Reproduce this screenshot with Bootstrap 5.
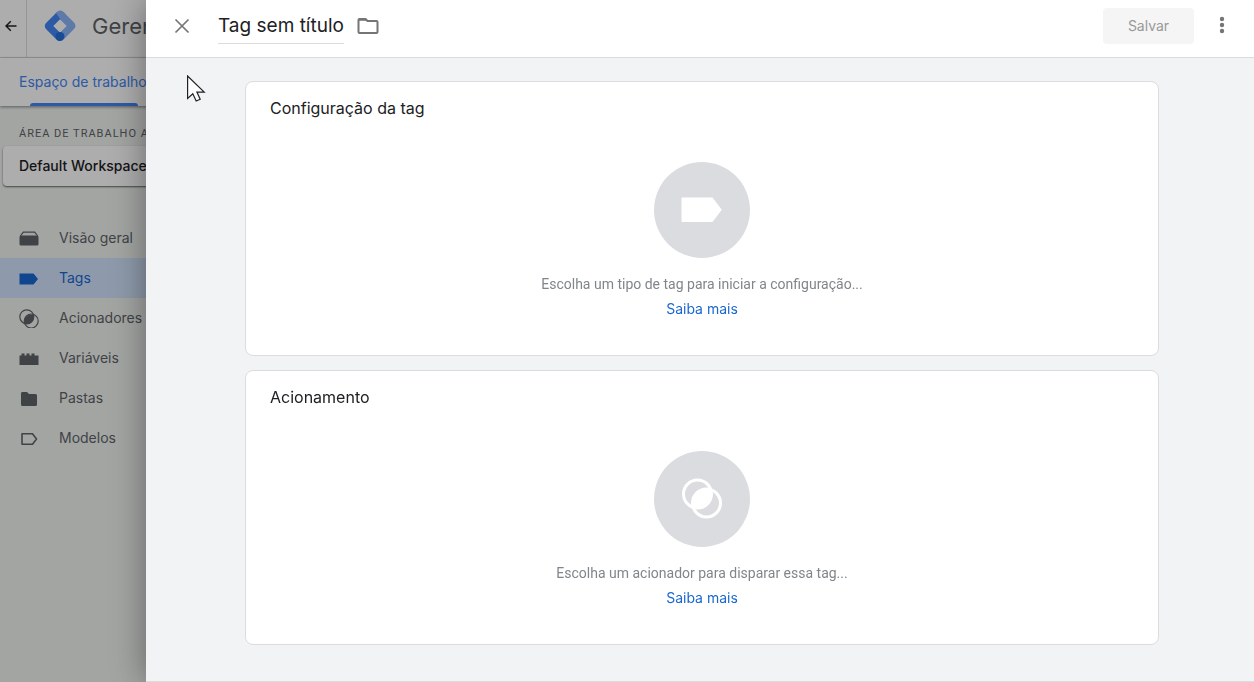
<!DOCTYPE html>
<html lang="pt-BR">
<head>
<meta charset="utf-8">
<meta name="viewport" content="width=device-width, initial-scale=1">
<title>Gerenciador de tags</title>
<link href="https://cdn.jsdelivr.net/npm/bootstrap@5.3.0/dist/css/bootstrap.min.css" rel="stylesheet">
<style>
  body { font-family: Inter, "Open Sans", sans-serif; font-size: 14px; line-height: 20px; color: #202124; background: #f1f3f1; }
  a { text-decoration: none; }
  svg { display: block; flex: none; }

  /* Page behind the sheet */
  .backpage { min-height: 100vh; overflow: hidden; white-space: nowrap; }
  .brandbar { height: 58px; border-bottom: 1px solid #dadce0; background: #fff; }
  .backbtn { width: 27px; padding: 0 4px 6px 0; border-right: 1px solid #dadce0; color: #202124; }
  .brand { padding: 0 0 6px 16px; gap: 15px; }
  .product { font-size: 22px; line-height: 32px; color: #5f6368; }
  .tabbar { height: 48px; padding-left: 19px; background: #fff; box-shadow: 0 1px 3px rgba(60,64,67,.6); }
  .tab-link { color: #4285f4; }
  .tab-link::after { content: ""; position: absolute; left: 11px; right: 9px; bottom: 0; height: 3px; border-radius: 3px 3px 0 0; background: #4285f4; }
  .sidemenu { width: 256px; }
  .overline { padding: 18px 0 2px 19px; font-family: Roboto, sans-serif; font-size: 11px; letter-spacing: 1px; color: #5f6368; }
  .workspace { height: 40px; margin-left: 3px; padding: 0 16px; border: 0; border-radius: 4px; background: #fff; text-align: left; font-weight: 500; color: #202124; box-shadow: 0 1px 2px rgba(60,64,67,.8); }
  .side-link { height: 40px; padding-left: 19px; gap: 20px; color: #5f6368; }
  .side-link.active { background: #d2e3fc; color: #1967d2; }
  .scrim { position: fixed; inset: 0; background: rgba(0,0,0,.32); }

  /* Sheet */
  .sheet { position: absolute; top: 0; right: 0; left: 146px; min-height: 100vh; background: #f1f3f4; border-bottom: 1px solid #dadce0; box-shadow: 0 0 32px rgba(0,0,0,.4); }
  .sheet-head { height: 58px; padding: 0 20px 6px 26px; background: #fff; border-bottom: 1px solid #dadce0; }
  .plain { border: 0; padding: 0; background: none; color: #757575; }
  .title-input { width: 126px; height: 36px; margin-left: 26px; margin-right: 12px; padding: 0; border: 0; border-bottom: 1px solid #dadce0; background: none; font-size: 19px; color: #202124; }
  .save { width: 91px; height: 36px; border: 0; border-radius: 4px; background: #f5f5f5; color: #999; }
  .sheet-body { padding: 23px 95px 36px 99px; gap: 14px; }
  .panel { padding: 14px 24px 36px; border: 1px solid #dadce0; border-radius: 8px; background: #fff; }
  .panel h2 { margin: 0 0 42px; font-size: 16px; line-height: 24px; font-weight: 400; }
  .disc { width: 96px; height: 96px; margin-bottom: 16px; border-radius: 50%; background: #dadce0; }
  .hint { margin: 0 0 5px; font-family: Roboto, sans-serif; color: #80868b; }
  .more { color: #1967d2; }
  .pointer { position: absolute; left: 187px; top: 75px; pointer-events: none; }
</style>
</head>
<body>
<div class="backpage">
  <header class="brandbar d-flex">
    <a href="#" class="backbtn d-flex align-items-center justify-content-center" aria-label="Voltar">
      <svg width="12" height="12" viewBox="0 0 12 12" fill="none" stroke="currentColor" stroke-width="1.5"><path d="M11.500 6H1.200M5.800 1.200 1 6l4.800 4.800"/></svg>
    </a>
    <div class="brand d-flex align-items-center">
      <svg width="34" height="32" viewBox="0 0 34 32">
        <path d="M12.500 3.500 Q17-1.500 21.500 3 L31 12.500 Q34 16 31 19 L21 29 16.500 23 23.500 16 12 5Z" fill="#8ab4f8"/>
        <path d="M13.500 2.500 L18 8.500 10.500 16 17 22.500 17 31 Q15 31 13.500 29.500 L3 19 Q.5 16 3 13Z" fill="#4285f4"/>
        <path d="M13 3Q17-1.500 21 2.500L23 4.500 17.500 9.500Z" fill="#8ab4f8"/>
        <path d="m17 9.500 6.500 6.500L17 22.500 10.500 16Z" fill="#fff"/>
        <circle cx="17" cy="26.500" r="4.500" fill="#246fdb"/>
      </svg>
      <span class="product">Gerenciador de tags</span>
    </div>
  </header>
  <nav class="tabbar position-relative d-flex">
    <a href="#" class="tab-link position-relative d-flex align-items-center">Espaço de trabalho</a>
  </nav>
  <aside class="sidemenu d-flex flex-column">
    <div class="overline">ÁREA DE TRABALHO ATUAL</div>
    <button type="button" class="workspace">Default Workspace</button>
    <nav class="d-flex flex-column mt-4 pt-2">
      <a href="#" class="side-link d-flex align-items-center">
        <svg width="20" height="20" viewBox="0 0 20 20" fill="currentColor"><path d="M4 3.500h12l3 4-.5 1-3.200-3.700H4.700L1.500 8.500 1 7.500z"/><rect x=".5" y="7.500" width="19" height="10" rx="1.500"/></svg>
        <span>Visão geral</span></a>
      <a href="#" class="side-link active d-flex align-items-center">
        <svg width="20" height="20" viewBox="0 0 20 20" fill="currentColor"><path d="M.5 5.500h14L19 11l-4.500 5.500H.5z"/></svg>
        <span>Tags</span></a>
      <a href="#" class="side-link d-flex align-items-center">
        <svg width="20" height="20" viewBox="0 0 20 20"><g fill="none" stroke="currentColor" stroke-width="1.200"><circle cx="7.800" cy="8.800" r="7"/><circle cx="12.200" cy="13" r="7"/></g><path d="M5.200 13.500a7 7 0 0 1 9.300-6.700 7 7 0 0 1-9 8.700z" fill="currentColor"/></svg>
        <span>Acionadores</span></a>
      <a href="#" class="side-link d-flex align-items-center">
        <svg width="20" height="20" viewBox="0 0 20 20" fill="currentColor"><path d="M.5 7.500h2v-2h3v2h2v-2h3v2h2v-2h3v2h4V17H.5z"/></svg>
        <span>Variáveis</span></a>
      <a href="#" class="side-link d-flex align-items-center">
        <svg width="20" height="20" viewBox="0 0 20 20" fill="currentColor"><path d="M3 4h5l2 2h6.500q1.500 0 1.500 1.500v9q0 1.500-1.500 1.500H3.500Q2 18 2 16.500V5.500Q2 4 3 4z"/></svg>
        <span>Pastas</span></a>
      <a href="#" class="side-link d-flex align-items-center">
        <svg width="20" height="20" viewBox="0 0 20 20" fill="none" stroke="currentColor" stroke-width="1.600" stroke-linejoin="round"><path d="M3 5.800h10.500L17.500 11l-4 5.200H3z"/></svg>
        <span>Modelos</span></a>
    </nav>
  </aside>
</div>
<div class="scrim"></div>

<main class="sheet">
  <header class="sheet-head d-flex align-items-center">
    <button type="button" class="plain" aria-label="Fechar"><svg width="20" height="20" viewBox="0 0 20 20" stroke="currentColor" stroke-width="1.700"><path d="m3.500 3.500 13 13M16.500 3.500l-13 13"/></svg></button>
    <input class="title-input" type="text" value="Tag sem título" aria-label="Nome da tag">
    <button type="button" class="plain" aria-label="Pasta"><svg width="24" height="24" viewBox="0 0 24 24" fill="none" stroke="currentColor" stroke-width="2" stroke-linejoin="round"><path d="M3.500 5h6l2 2h9q1 0 1 1v10q0 1-1 1h-17q-1 0-1-1V6q0-1 1-1z"/><path d="M3 5.800h7.500" /></svg></button>
    <button type="button" class="save ms-auto" disabled>Salvar</button>
    <button type="button" class="plain ms-3" aria-label="Mais opções"><svg width="24" height="24" viewBox="0 0 24 24" fill="currentColor"><circle cx="12" cy="5" r="2.200"/><circle cx="12" cy="11" r="2.200"/><circle cx="12" cy="17" r="2.200"/></svg></button>
  </header>
  <div class="sheet-body d-flex flex-column">
    <section class="panel">
      <h2>Configuração da tag</h2>
      <div class="d-flex flex-column align-items-center">
        <div class="disc d-flex align-items-center justify-content-center"><svg width="42" height="42" viewBox="0 0 42 42" fill="#fff"><path d="M1.500 8.500h30l9.300 12.200-9.300 12.300h-30q-1 0-1-1V9.500q0-1 1-1z"/></svg></div>
        <p class="hint">Escolha um tipo de tag para iniciar a configuração...</p>
        <a href="#" class="more">Saiba mais</a>
      </div>
    </section>
    <section class="panel">
      <h2>Acionamento</h2>
      <div class="d-flex flex-column align-items-center">
        <div class="disc d-flex align-items-center justify-content-center"><svg width="42" height="42" viewBox="0 0 42 42"><g fill="none" stroke="#fff" stroke-width="3"><circle cx="16.500" cy="16" r="14"/><circle cx="25.500" cy="25" r="14"/></g><path d="M11 28.500A15.500 15.500 0 0 1 30.500 12.500 15.500 15.500 0 0 1 11 28.500z" fill="#fff"/></svg></div>
        <p class="hint">Escolha um acionador para disparar essa tag...</p>
        <a href="#" class="more">Saiba mais</a>
      </div>
    </section>
  </div>
</main>
<svg class="pointer" width="19" height="28" viewBox="0 0 19 28" fill="#fff" stroke="#202124" stroke-width="1.200"><path d="M.6 1v22.500l5.200-4.800 3.400 7.300 4-1.700-3.300-7.200h7.300z"/></svg>
<script src="https://cdn.jsdelivr.net/npm/bootstrap@5.3.0/dist/js/bootstrap.bundle.min.js"></script>
</body>
</html>
